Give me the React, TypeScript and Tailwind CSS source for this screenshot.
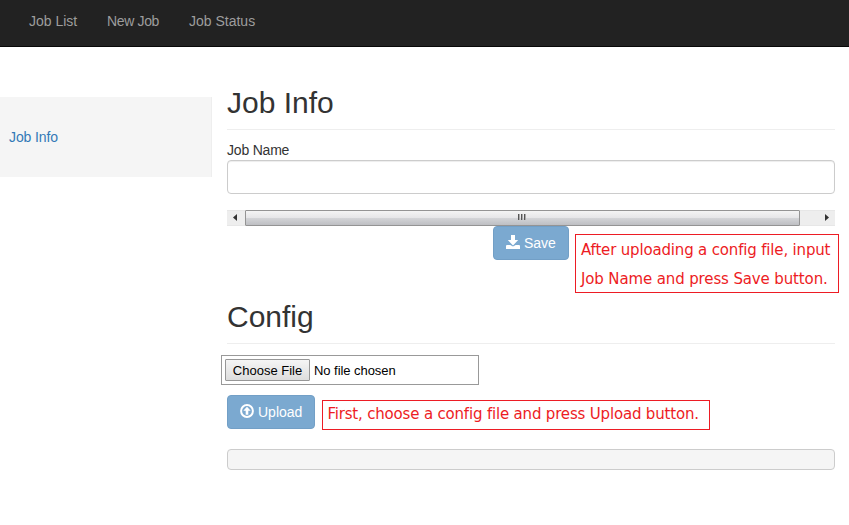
import React from "react";

function DownloadIcon() {
  return (
    <svg className="-mt-[2px] h-[14px] w-[14px]" viewBox="0 0 14 14" fill="currentColor" aria-hidden="true">
      <path d="M5 0h4v5h3.2L7 10.4 1.8 5H5z" />
      <path d="M.7 10h3.6L7 11.6 9.7 10h3.6l.7.7V14H0v-3.3z" />
    </svg>
  );
}

function UploadIcon() {
  return (
    <svg className="-mt-[2px] h-[14px] w-[14px]" viewBox="0 0 14 14" fill="currentColor" aria-hidden="true">
      <circle cx="7" cy="7" r="5.9" fill="none" stroke="currentColor" strokeWidth="2" />
      <path d="M7 2.7l3.7 4.1H8.3v3.9H5.7V6.8H3.3z" />
    </svg>
  );
}

function ActionButton({ icon, children }: { icon: React.ReactNode; children: React.ReactNode }) {
  return (
    <button className="flex h-[34px] items-center gap-1 rounded border border-[#729fc6] bg-[#7ba9d0] px-3 text-sm text-white">
      {icon}
      <span>{children}</span>
    </button>
  );
}

function Scrollbar() {
  return (
    <div className="mt-4 flex h-4 items-stretch border-y border-[#e7e7e7] bg-[#eeeeee]">
      <div className="flex w-[18px] items-center justify-center pr-[2px] pb-px">
        <svg className="h-[7px] w-1" viewBox="0 0 4 7" fill="#333"><path d="M4 0v7L0 3.5z" /></svg>
      </div>
      <div className="-my-px flex w-[555px] items-center justify-center gap-px rounded-[1px] border border-[#949494] bg-[linear-gradient(#f4f4f4_0%,#e6e6e8_48%,#d3d4d7_52%,#bebfc3_100%)] pr-[2px] pb-[2px]">
        <i className="h-[6px] w-[2px] border-r border-[#aaa] bg-[#555]" />
        <i className="h-[6px] w-[2px] border-r border-[#aaa] bg-[#555]" />
        <i className="h-[6px] w-[2px] border-r border-[#aaa] bg-[#555]" />
      </div>
      <div className="flex flex-1 items-center justify-center pb-px pl-[19px]">
        <svg className="h-[7px] w-1" viewBox="0 0 4 7" fill="#333"><path d="M0 0v7L4 3.5z" /></svg>
      </div>
    </div>
  );
}

function Heading({ children }: { children: React.ReactNode }) {
  return (
    <h2 className="h-[43px] border-b border-[#eeeeee] text-[30px] leading-[31px] font-normal">{children}</h2>
  );
}

export default function App() {
  return (
    <div className="h-[525px] overflow-hidden bg-white font-['Liberation_Sans',Arial,sans-serif] text-sm leading-5 text-[#333333]">
      <nav className="flex h-[47px] gap-[30px] border-b border-[#080808] bg-[#222222] pt-[11px] pl-[29px] text-[#9d9d9d]">
        <a className="w-12 whitespace-nowrap">Job List</a>
        <a className="w-[52px] tracking-[-0.35px] whitespace-nowrap">New Job</a>
        <a>Job Status</a>
      </nav>
      <div className="flex">
        <aside className="mt-[50px] h-20 w-[212px] border-r border-[#eeeeee] bg-[#f5f5f5] pt-[30px] pl-[9px] tracking-[-0.1px] text-[#337ab7]">
          <a>Job Info</a>
        </aside>
        <main className="ml-[15px] w-[608px] pt-10">
          <Heading>Job Info</Heading>
          <label className="mt-[10px] block tracking-[-0.2px]">Job Name</label>
          <input className="block h-[34px] w-full rounded border border-[#cccccc] shadow-[inset_0_1px_1px_rgba(0,0,0,0.075)]" />
          <Scrollbar />
          <div className="relative ml-[266px] flex">
            <ActionButton icon={<DownloadIcon />}>Save</ActionButton>
            <p className="absolute top-2 left-[82px] h-[59px] w-[264px] border border-[#ed1c24] pt-px pl-[5px] font-['DejaVu_Sans',Verdana,sans-serif] text-[15px] leading-[29px] whitespace-nowrap text-[#ed1c24]">
              <span className="block tracking-[-0.17px]">After uploading a config file, input</span>
              <span className="block tracking-[-0.13px]">Job Name and press Save button.</span>
            </p>
          </div>
          <section className="mt-[41px]">
            <Heading>Config</Heading>
            <div className="mt-[11px] -ml-[6px] flex h-[30px] w-[258px] items-center border border-[#999999] pl-[3px] text-[13px] text-black">
              <button className="h-[22px] w-[85px] rounded-[1px] border border-[#979797] bg-linear-to-b from-[#f5f5f5] to-[#dddddd] pt-px leading-5 whitespace-nowrap">Choose File</button>
              <span className="ml-1 pt-px tracking-[-0.05px]">No file chosen</span>
            </div>
            <div className="mt-[10px] flex">
              <ActionButton icon={<UploadIcon />}>Upload</ActionButton>
              <p className="mt-[5px] ml-[7px] h-[30px] w-[388px] border border-[#ed1c24] pl-1 font-['DejaVu_Sans',Verdana,sans-serif] text-[15px] leading-[26px] tracking-[-0.18px] whitespace-nowrap text-[#ed1c24]">
                <span>First, choose a config file and press Upload button.</span>
              </p>
            </div>
            <div className="mt-[19px] h-[21px] rounded border border-[#cccccc] bg-[#f5f5f5]" />
          </section>
        </main>
      </div>
    </div>
  );
}
